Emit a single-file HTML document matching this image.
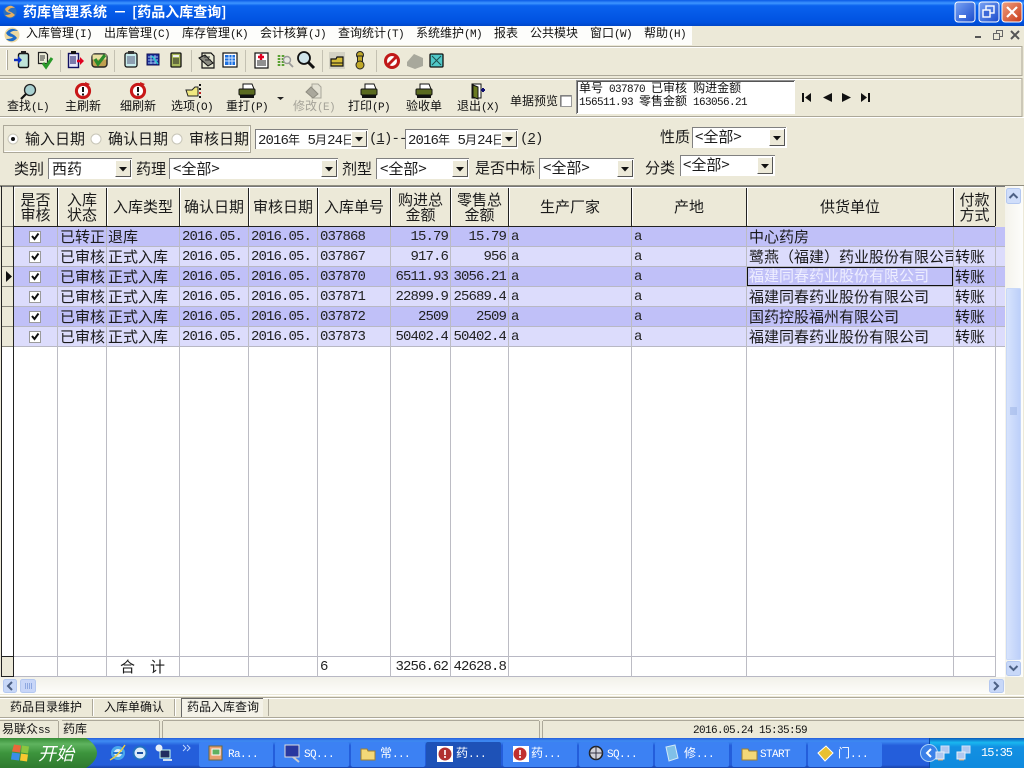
<!DOCTYPE html>
<html><head><meta charset="utf-8"><title>药库管理系统</title>
<style>
html,body{margin:0;padding:0;width:1024px;height:768px;overflow:hidden;background:#ece9d8}
svg.bg{position:absolute;left:0;top:0}
p{position:absolute;margin:0;white-space:nowrap;font:12px/16px "WenQuanYi Zen Hei","Noto Sans CJK SC",sans-serif;color:#111}
p.f{font-size:15px;color:#1a1a1a}
p.h{font-size:15px;line-height:15px;text-align:center;color:#1a1a1a}
p.m{font:14px/16px "Liberation Mono",monospace;letter-spacing:-.9px;color:#222}
p.r{font:14px/16px "Liberation Mono",monospace;letter-spacing:-.9px;direction:rtl;overflow:hidden;text-align:right;color:#222}
span.l{font:11px "Liberation Mono",monospace;letter-spacing:-.6px}
span.c{font:12px "WenQuanYi Zen Hei","Noto Sans CJK SC",sans-serif;letter-spacing:0}
p.w{color:#fff}
p.g{color:#a5a399}
</style></head><body>
<svg class="bg" width="1024" height="768" viewBox="0 0 1024 768">
<defs>
<linearGradient id="tb" x1="0" y1="0" x2="0" y2="1"><stop offset="0" stop-color="#0a5ae6"/><stop offset=".12" stop-color="#3d95ff"/><stop offset=".22" stop-color="#0a62ee"/><stop offset=".85" stop-color="#0052e0"/><stop offset="1" stop-color="#0047c8"/></linearGradient>
<linearGradient id="tk" x1="0" y1="0" x2="0" y2="1"><stop offset="0" stop-color="#245edb"/><stop offset=".1" stop-color="#3f8cf3"/><stop offset=".25" stop-color="#245edb"/><stop offset=".9" stop-color="#245edb"/><stop offset="1" stop-color="#1941a5"/></linearGradient>
<linearGradient id="st" x1="0" y1="0" x2="0" y2="1"><stop offset="0" stop-color="#388e38"/><stop offset=".2" stop-color="#5fb35f"/><stop offset=".5" stop-color="#3c943c"/><stop offset="1" stop-color="#2f7a2f"/></linearGradient>
<linearGradient id="tr" x1="0" y1="0" x2="0" y2="1"><stop offset="0" stop-color="#0c59b9"/><stop offset=".15" stop-color="#19b8f0"/><stop offset=".3" stop-color="#1290e2"/><stop offset="1" stop-color="#0f8ade"/></linearGradient>
<linearGradient id="btn" x1="0" y1="0" x2="1" y2="1"><stop offset="0" stop-color="#7aa4f4"/><stop offset="1" stop-color="#1a4bcc"/></linearGradient>
<linearGradient id="cls" x1="0" y1="0" x2="1" y2="1"><stop offset="0" stop-color="#f0a080"/><stop offset="1" stop-color="#c83a18"/></linearGradient>
<linearGradient id="sb" x1="0" y1="0" x2="1" y2="0"><stop offset="0" stop-color="#d8e4fc"/><stop offset="1" stop-color="#bccffa"/></linearGradient>
<linearGradient id="hs" x1="0" y1="0" x2="0" y2="1"><stop offset="0" stop-color="#f2f1e9"/><stop offset="1" stop-color="#fdfdfb"/></linearGradient>
<linearGradient id="vs" x1="0" y1="0" x2="1" y2="0"><stop offset="0" stop-color="#f4f3ec"/><stop offset="1" stop-color="#fdfdfb"/></linearGradient>
</defs>

<!-- title bar -->
<rect x="0" y="0" width="1024" height="26" fill="url(#tb)"/>
<circle cx="10" cy="12" r="6.5" fill="#2a6fc0"/><path d="M5 9 Q10 3 15 8 Q10 7 8 11 Q12 12 15 15 Q10 20 5 15 Q10 15 11 13 Q6 13 5 9Z" fill="#e8b060"/>
<rect x="955" y="2" width="20" height="20" rx="3" fill="url(#btn)" stroke="#fff"/><rect x="959" y="15" width="7" height="3" fill="#fff"/>
<rect x="979" y="2" width="20" height="20" rx="3" fill="url(#btn)" stroke="#fff"/><rect x="986" y="6" width="8" height="7" fill="none" stroke="#fff" stroke-width="1.4"/><rect x="983" y="10" width="7" height="7" fill="#3c68d8" stroke="#fff" stroke-width="1.4"/>
<rect x="1002" y="2" width="20" height="20" rx="3" fill="url(#cls)" stroke="#fff"/><path d="M1007 7 L1017 17 M1017 7 L1007 17" stroke="#fff" stroke-width="2.2"/>

<!-- menu bar -->
<rect x="0" y="26" width="692" height="19" fill="#fdfdfb"/>
<circle cx="12" cy="35" r="7.5" fill="#eed9a0"/><path d="M6 33 Q11 26 18 31 Q12 30 10 33 Q15 35 17 38 Q12 44 6 39 Q12 39 13 37 Q8 37 6 33Z" fill="#1f6cc8"/>
<path d="M975 37h6" stroke="#555" stroke-width="2"/>
<rect x="996.500" y="30.500" width="6" height="6" fill="none" stroke="#666"/><rect x="993.500" y="33.500" width="6" height="6" fill="#ece9d8" stroke="#666"/>
<path d="M1011 31 L1019 39 M1019 31 L1011 39" stroke="#555" stroke-width="2"/>

<!-- toolbar 1 -->
<path d="M0 46.500H1022V75.500H0" fill="none" stroke="#aca899"/>
<path d="M0 47.500H1021" stroke="#fff"/>
<path d="M7.500 50V70" stroke="#aca899"/><path d="M6.500 50V70" stroke="#fff"/>
<g stroke="#c4c1b2"><path d="M60.500 50V72 M114.500 50V72 M191.500 50V72 M245.500 50V72 M322.500 50V72 M376.500 50V72"/></g>
<!-- icons -->
<rect x="18.500" y="53.500" width="10" height="14" rx="1.500" fill="#bfe4d8" stroke="#111" stroke-width="1.400"/><rect x="21" y="51" width="5" height="3" fill="#222"/><path d="M14 60h6" stroke="#1030c0" stroke-width="2.400"/><path d="M18 56l4 4-4 4z" fill="#1030c0"/>
<path d="M38.500 52.500h7l2 2v9h-9z" fill="#f0f0dc" stroke="#222" stroke-width="1.200"/><path d="M40 56h5M40 58h5M40 60h4" stroke="#333"/><path d="M43 63l3 4 6-9" stroke="#2a9a2a" stroke-width="3" fill="none"/>
<rect x="68.500" y="53.500" width="10" height="14" fill="#e8e8f8" stroke="#101060" stroke-width="1.400"/><rect x="71" y="51" width="5" height="3" fill="#111"/><path d="M70 57h6M70 59h6M70 61h6M70 63h6" stroke="#101060"/><path d="M77 61h4" stroke="#e00020" stroke-width="2.600"/><path d="M80 57l4 4-4 4z" fill="#e00020"/>
<rect x="92" y="54" width="15" height="13" rx="3" fill="#c0a050" stroke="#222" stroke-width="1.400"/><rect x="92.500" y="54.500" width="14" height="5" fill="#e8e0a0"/><path d="M95 59l3 5 7-9" stroke="#2a8a2a" stroke-width="3.200" fill="none"/>
<rect x="125" y="53" width="12" height="14" rx="2" fill="#c8ecec" stroke="#111" stroke-width="1.300"/><rect x="128" y="51" width="6" height="3" fill="#333"/><path d="M127 57h8M127 59h8M127 61h8M127 63h8" stroke="#557"/>
<rect x="147" y="54" width="12" height="11" fill="#1c2ca0" stroke="#101050"/><path d="M148 57h10M148 60h10M148 63h10M151 55v9M155 55v9" stroke="#9ac4e8"/><path d="M152 56l6 8" stroke="#20d0d0" stroke-width="1.400"/>
<rect x="171" y="53" width="10" height="14" rx="1" fill="#a8b85c" stroke="#111" stroke-width="1.300"/><rect x="173" y="55" width="6" height="2" fill="#eee"/><path d="M173 59h6M173 61h6M173 63h6" stroke="#222"/>
<path d="M202 53h9l3 3v12h-12z" fill="#e8e8d4" stroke="#111" stroke-width="1.200"/><path d="M199 58l6-3 8 8-5 3z" fill="#8a8a80" stroke="#111"/><path d="M204 57h6M205 60h6" stroke="#333"/>
<rect x="223" y="53" width="14" height="14" fill="#fff" stroke="#111" stroke-width="1.200"/><path d="M225 55h10v10h-10z" fill="#1c70e0"/><path d="M225 58h10M225 61h10M229 55v10M232 55v10" stroke="#d8e8ff"/>
<rect x="255" y="53" width="13" height="15" fill="#fff" stroke="#111" stroke-width="1.200"/><path d="M261 54v6M258 57h6" stroke="#e00020" stroke-width="2.400"/><path d="M257 61h9M257 63h9M257 65h9" stroke="#222"/>
<path d="M279 55v12M283 55v12" stroke="#58a030" stroke-width="2.600" stroke-dasharray="2 1"/><circle cx="287" cy="60" r="3.500" fill="#e8e8e0" stroke="#999" stroke-width="1.400"/><path d="M289 63l4 4" stroke="#999" stroke-width="1.800"/>
<circle cx="304" cy="58" r="6" fill="#cfe4ea" stroke="#111" stroke-width="1.800"/><path d="M308 62l6 6" stroke="#111" stroke-width="3"/>
<rect x="329" y="52" width="16" height="17" fill="#d4d2c4"/><path d="M331 59h5l1-2h6v9h-12z" fill="#d4bc38" stroke="#111" stroke-width="1.200"/><path d="M331 63h12" stroke="#111"/>
<circle cx="360" cy="55" r="3.500" fill="#c0a828" stroke="#222"/><rect x="357.500" y="56" width="5" height="9" fill="#c0a828" stroke="#222"/><circle cx="360" cy="65" r="4" fill="#c0a828" stroke="#222"/>
<circle cx="392" cy="61" r="6.500" fill="#fff" stroke="#c01818" stroke-width="3"/><path d="M388 65l8-8" stroke="#c01818" stroke-width="2.800"/>
<path d="M407 62 L414 54 L423 58 L423 66 L415 69 L407 66Z" fill="#a8a89c"/>
<rect x="430" y="54" width="13" height="13" rx="1" fill="#50c8c8" stroke="#111" stroke-width="1.300"/><path d="M432 56l9 9M441 56l-9 9" stroke="#205050"/>

<!-- toolbar 2 -->
<path d="M0 78.500H1022V116.500H0" fill="none" stroke="#aca899"/><path d="M0 79.500H1021" stroke="#fff"/>
<circle cx="30" cy="90" r="5.500" fill="#a8d0d0" stroke="#222" stroke-width="1.300"/><path d="M26 94l-5 5" stroke="#111" stroke-width="2.200"/>
<circle cx="83" cy="91" r="6.600" fill="#fff" stroke="#c81818" stroke-width="3"/><path d="M83 87v5M83 93.500v2" stroke="#111" stroke-width="2"/><path d="M85 82l5 2-4 3z" fill="#c81818"/>
<circle cx="138" cy="91" r="6.600" fill="#fff" stroke="#c81818" stroke-width="3"/><path d="M138 87v5M138 93.500v2" stroke="#111" stroke-width="2"/><path d="M140 82l5 2-4 3z" fill="#c81818"/>
<path d="M186 90h6l3-3h3v9h-10z" fill="#f0e880" stroke="#222"/><rect x="199" y="84" width="2" height="2" fill="#111"/><rect x="199" y="88" width="2" height="2" fill="#111"/><rect x="199" y="92" width="2" height="2" fill="#c02020"/><rect x="199" y="96" width="2" height="2" fill="#111"/>
<path d="M243 84h9l2 5h-11z" fill="#fff" stroke="#111"/><rect x="239" y="89" width="16" height="6" rx="1" fill="#5a6a20" stroke="#111"/><rect x="240" y="95" width="14" height="3" fill="#111"/>
<path d="M277 97h7l-3.500 3z" fill="#222"/>
<path d="M312 84h6l3 3v11h-9z" fill="#e4e2d4" stroke="#a8a69a"/><path d="M306 92l5-5 7 7-5 4z" fill="#aaa89c" stroke="#8e8c80"/>
<path d="M365 84h9l2 5h-11z" fill="#fff" stroke="#111"/><rect x="361" y="89" width="16" height="6" rx="1" fill="#5a6a20" stroke="#111"/><rect x="362" y="95" width="14" height="3" fill="#111"/>
<path d="M420 84h9l2 5h-11z" fill="#fff" stroke="#111"/><rect x="416" y="89" width="16" height="6" rx="1" fill="#5a6a20" stroke="#111"/><rect x="417" y="95" width="14" height="3" fill="#111"/>
<rect x="472" y="84" width="9" height="14" fill="#fff" stroke="#111"/><path d="M473 85l5 2v12l-5-2z" fill="#6a7a20" stroke="#111"/><path d="M481 90h4M483 88v4" stroke="#101070" stroke-width="2"/>
<!-- preview checkbox + info box -->
<rect x="560.500" y="95.500" width="11" height="11" fill="#fff" stroke="#999"/><path d="M561 106V96H571" fill="none" stroke="#666"/>
<rect x="576" y="80" width="219" height="34" fill="#fff"/><path d="M576.500 114V80.500H795" fill="none" stroke="#909090"/><path d="M577.500 113V81.500H794" fill="none" stroke="#555"/>
<g fill="#111"><path d="M802 93h2v9h-2zM811 93v9l-6-4.500z"/><path d="M832 93v9l-9-4.500z"/><path d="M842 93v9l9-4.500z"/><path d="M861 93v9l6-4.500-6-4.500zM868 93h2v9h-2z"/></g>
<path d="M0 117.500H1024" stroke="#fff"/>

<!-- filter panel -->
<rect x="3.500" y="125.500" width="247" height="27" fill="none" stroke="#aca899"/><path d="M4.500 151.500H249.500V126.500" fill="none" stroke="#fff"/>
<path d="M0 185.500H1024" stroke="#908e80"/>
<circle cx="13" cy="139" r="5" fill="#fff" stroke="#c8c6b8"/><circle cx="13" cy="139" r="2" fill="#111"/>
<circle cx="96" cy="139" r="5" fill="#fff" stroke="#c8c6b8"/><circle cx="177" cy="139" r="5" fill="#fff" stroke="#c8c6b8"/>
<!-- combos -->
<rect x="255" y="129" width="113" height="20" fill="#fff"/><path d="M255.500 149V129.500H368" fill="none" stroke="#808080"/><rect x="351" y="131" width="16" height="16" fill="#ece9d8"/><path d="M351.500 147V131.500H367" stroke="#fff" fill="none"/><path d="M351.500 146.500H366.500V131" stroke="#555" fill="none"/><path d="M355 137h8l-4 4.500z" fill="#111"/>
<rect x="405" y="129" width="113" height="20" fill="#fff"/><path d="M405.500 149V129.500H518" fill="none" stroke="#808080"/><rect x="501" y="131" width="16" height="16" fill="#ece9d8"/><path d="M501.500 147V131.500H517" stroke="#fff" fill="none"/><path d="M501.500 146.500H516.500V131" stroke="#555" fill="none"/><path d="M505 137h8l-4 4.500z" fill="#111"/>
<rect x="692" y="127" width="95" height="21" fill="#fff"/><path d="M692.500 148V127.500H786" fill="none" stroke="#808080"/><rect x="769" y="129" width="16" height="17" fill="#ece9d8"/><path d="M769.500 146V129.500H785" stroke="#fff" fill="none"/><path d="M769.500 145.500H784.500V129" stroke="#555" fill="none"/><path d="M773 136h8l-4 4.500z" fill="#111"/>
<rect x="48" y="158" width="84" height="21" fill="#fff"/><path d="M48.500 179V158.500H132" fill="none" stroke="#808080"/><rect x="115" y="160" width="16" height="17" fill="#ece9d8"/><path d="M115.500 177V160.500H131" stroke="#fff" fill="none"/><path d="M115.500 176.500H130.500V160" stroke="#555" fill="none"/><path d="M119 167h8l-4 4.500z" fill="#111"/>
<rect x="169" y="158" width="169" height="21" fill="#fff"/><path d="M169.500 179V158.500H338" fill="none" stroke="#808080"/><rect x="321" y="160" width="16" height="17" fill="#ece9d8"/><path d="M321.500 177V160.500H337" stroke="#fff" fill="none"/><path d="M321.500 176.500H336.500V160" stroke="#555" fill="none"/><path d="M325 167h8l-4 4.500z" fill="#111"/>
<rect x="376" y="158" width="93" height="21" fill="#fff"/><path d="M376.500 179V158.500H469" fill="none" stroke="#808080"/><rect x="452" y="160" width="16" height="17" fill="#ece9d8"/><path d="M452.500 177V160.500H468" stroke="#fff" fill="none"/><path d="M452.500 176.500H467.500V160" stroke="#555" fill="none"/><path d="M456 167h8l-4 4.500z" fill="#111"/>
<rect x="539" y="158" width="95" height="21" fill="#fff"/><path d="M539.500 179V158.500H634" fill="none" stroke="#808080"/><rect x="617" y="160" width="16" height="17" fill="#ece9d8"/><path d="M617.500 177V160.500H633" stroke="#fff" fill="none"/><path d="M617.500 176.500H632.500V160" stroke="#555" fill="none"/><path d="M621 167h8l-4 4.500z" fill="#111"/>
<rect x="680" y="155" width="95" height="21" fill="#fff"/><path d="M680.500 176V155.500H775" fill="none" stroke="#808080"/><rect x="757" y="157" width="16" height="17" fill="#ece9d8"/><path d="M757.500 174V157.500H773" stroke="#fff" fill="none"/><path d="M757.500 173.500H772.500V157" stroke="#555" fill="none"/><path d="M761 164h8l-4 4.500z" fill="#111"/>

<!-- grid -->
<rect x="1" y="186" width="1004" height="491" fill="#fff"/>
<rect x="1" y="187" width="1004" height="40" fill="#ece9d8"/>
<rect x="14" y="227" width="991" height="20" fill="#c0c0f8"/>
<rect x="14" y="247" width="991" height="20" fill="#dcdcfc"/>
<rect x="14" y="267" width="991" height="20" fill="#c0c0f8"/>
<rect x="14" y="287" width="991" height="20" fill="#dcdcfc"/>
<rect x="14" y="307" width="991" height="20" fill="#c0c0f8"/>
<rect x="14" y="327" width="991" height="20" fill="#dcdcfc"/>
<rect x="1" y="227" width="13" height="120" fill="#ece9d8"/>
<rect x="1" y="657" width="13" height="20" fill="#ece9d8"/>
<path d="M0 186.500H1005" stroke="#777"/>
<path d="M1.500 186V677" stroke="#222"/>
<path d="M13.500 186V677" stroke="#222"/>
<path d="M14 226.500H995" stroke="#222"/>
<g stroke="#b8b8c4"><path d="M14 246.500H1005M14 266.500H1005M14 286.500H1005M14 306.500H1005M14 326.500H1005M14 346.500H1005M14 656.500H995M14 676.500H995"/></g>
<g stroke="#8c8a80"><path d="M2 226.500H13M2 246.500H13M2 266.500H13M2 286.500H13M2 306.500H13M2 326.500H13M2 346.500H13"/></g>
<g stroke="#222"><path d="M1 656.500H13M1 676.500H13"/></g>
<g stroke="#222"><path d="M57.500 187V226M106.500 187V226M179.500 187V226M248.500 187V226M317.500 187V226M390.500 187V226M450.500 187V226M508.500 187V226M631.500 187V226M746.500 187V226M953.500 187V226M995.500 187V226"/></g>
<g stroke="#fff"><path d="M14.500 188V225M58.500 188V225M107.500 188V225M180.500 188V225M249.500 188V225M318.500 188V225M391.500 188V225M451.500 188V225M509.500 188V225M632.500 188V225M747.500 188V225M954.500 188V225M14 187.500H995"/></g>
<g stroke="#bcbcc4"><path d="M57.500 227V677M106.500 227V677M179.500 227V677M248.500 227V677M317.500 227V677M390.500 227V677M450.500 227V677M508.500 227V677M631.500 227V677M746.500 227V677M953.500 227V677M995.500 227V677"/></g>
<!-- row indicator arrow -->
<path d="M6 271v11l6-5.500z" fill="#111"/>
<!-- checkboxes -->
<g fill="#fff" stroke="#9a9a9a"><rect x="29.500" y="231.500" width="11" height="11"/><rect x="29.500" y="251.500" width="11" height="11"/><rect x="29.500" y="271.500" width="11" height="11"/><rect x="29.500" y="291.500" width="11" height="11"/><rect x="29.500" y="311.500" width="11" height="11"/><rect x="29.500" y="331.500" width="11" height="11"/></g>
<g fill="none" stroke="#111" stroke-width="2"><path d="M32 236l2.500 3 4-5.500"/><path d="M32 256l2.500 3 4-5.500"/><path d="M32 276l2.500 3 4-5.500"/><path d="M32 296l2.500 3 4-5.500"/><path d="M32 316l2.500 3 4-5.500"/><path d="M32 336l2.500 3 4-5.500"/></g>
<rect x="747.500" y="267.500" width="205" height="18" fill="#c0c0f8" stroke="#111"/>

<!-- v scrollbar -->
<rect x="1005" y="186" width="18" height="491" fill="url(#vs)"/>
<rect x="1006.500" y="188.500" width="14" height="15" rx="2" fill="#d0defa" stroke="#b4c8f0"/><path d="M1009.500 198l4-4 4 4" stroke="#4d6185" stroke-width="2" fill="none"/>
<rect x="1006.500" y="288.500" width="14" height="371" rx="1" fill="url(#sb)" stroke="#c8d8f8"/>
<path d="M1010 408h7M1010 410h7M1010 412h7M1010 414h7" stroke="#9ab2e4"/>
<rect x="1006.500" y="661.500" width="14" height="14" rx="2" fill="#c8d8f8" stroke="#b4c8f0"/><path d="M1009.500 666l4 4 4-4" stroke="#4d6185" stroke-width="2" fill="none"/>
<!-- h scrollbar -->
<rect x="0" y="677" width="1005" height="17" fill="url(#hs)"/>
<rect x="1005" y="677" width="18" height="17" fill="#ece9d8"/>
<rect x="3.500" y="679.500" width="13" height="13" rx="2" fill="#c8d8f8" stroke="#b4c8f0"/><path d="M12 682l-4 4 4 4" stroke="#4d6185" stroke-width="2" fill="none"/>
<rect x="20.500" y="679.500" width="15" height="13" rx="2" fill="#c8d6f8" stroke="#b4c8f0"/><path d="M25.500 683v6M27.500 683v6M29.500 683v6M31.500 683v6" stroke="#8ea8e0"/>
<rect x="989.500" y="679.500" width="14" height="13" rx="2" fill="#c8d8f8" stroke="#b4c8f0"/><path d="M994 682l4 4-4 4" stroke="#4d6185" stroke-width="2" fill="none"/>
<path d="M0 695.500H1024" stroke="#fff"/>

<!-- tabs -->
<path d="M0 697.500H1024" stroke="#aca899"/><path d="M0 698.500H1024" stroke="#fff"/>
<path d="M92.500 699V716M174.500 699V716M268.500 699V716" stroke="#aca899"/><path d="M93.500 699V716M175.500 699V716" stroke="#fff"/>
<rect x="181" y="698" width="82" height="19" fill="#f4f2e8"/><path d="M181.500 717V698.500H263" fill="none" stroke="#666"/>
<path d="M0 717.500H1024" stroke="#aca899"/><path d="M0 718.500H1024" stroke="#fff"/>
<!-- status -->
<path d="M58.500 721V738M159.500 721V738M162.500 721V738M539.500 721V738M542.500 721V738" stroke="#aca899"/>
<path d="M0 720.500H58M62 720.500H159M163 720.500H539M543 720.500H1024" stroke="#aca899"/>

<!-- taskbar -->
<rect x="0" y="738" width="1024" height="30" fill="url(#tk)"/>
<path d="M0 738H86Q97 745 97 753Q97 761 86 768H0Z" fill="url(#st)"/>
<g transform="translate(2,-1.500)"><path d="M12 746l7 1-1 7-8-1z" fill="#e8683a"/><path d="M20 747l7 1-1 7-7-1z" fill="#8cc63f"/><path d="M10 754l8 1-1 7-8-1z" fill="#3a8ee8"/><path d="M19 755l7 1-1 7-7-1z" fill="#f8c830"/></g>
<circle cx="118" cy="753" r="5.500" fill="#dcecf8" stroke="#4aa8ec" stroke-width="3"/><path d="M113 753h10" stroke="#2878d0" stroke-width="2"/><path d="M110 760Q118 756 125 745" stroke="#f0d040" stroke-width="1.400" fill="none"/>
<circle cx="140" cy="753" r="6.500" fill="#dcecf8" stroke="#2070c0" stroke-width="2"/><path d="M137 753h6" stroke="#1a4ea0" stroke-width="2"/>
<rect x="160" y="750" width="10" height="8" fill="#222c60" stroke="#cfe"/><circle cx="159" cy="748" r="3.500" fill="#e8f0f8"/><path d="M163 760h9" stroke="#d0e0f0" stroke-width="2"/>
<path d="M183 745l3 3-3 3M187 745l3 3-3 3" fill="none" stroke="#c0d8ff"/>
<g fill="#3c81f3"><rect x="199" y="742" width="74" height="25" rx="2"/><rect x="275" y="742" width="74" height="25" rx="2"/><rect x="351" y="742" width="74" height="25" rx="2"/><rect x="503" y="742" width="74" height="25" rx="2"/><rect x="579" y="742" width="74" height="25" rx="2"/><rect x="655" y="742" width="74" height="25" rx="2"/><rect x="732" y="742" width="74" height="25" rx="2"/><rect x="808" y="742" width="74" height="25" rx="2"/></g>
<rect x="426" y="742" width="75" height="25" rx="2" fill="#1e52b7"/>
<rect x="209" y="746" width="13" height="14" fill="#e8a070" stroke="#664"/><rect x="212" y="749" width="8" height="6" fill="#60b060" stroke="#fff"/>
<rect x="285" y="745" width="14" height="12" fill="#2838a0" stroke="#ddd"/><path d="M293 757l6 5" stroke="#ccc" stroke-width="2"/>
<path d="M361 749h6l1 2h7v9h-14z" fill="#f4d878" stroke="#a08030"/>
<rect x="437" y="746" width="16" height="16" fill="#fff"/><circle cx="445" cy="754" r="6.500" fill="#b03030"/><path d="M445 750v5M445 756v2" stroke="#fff" stroke-width="1.600"/>
<rect x="513" y="746" width="16" height="16" fill="#fff"/><circle cx="520" cy="754" r="6.500" fill="#c03030"/><path d="M520 750v5M520 756v2" stroke="#fff" stroke-width="1.600"/>
<circle cx="596" cy="753" r="6.500" fill="#d0d0d8" stroke="#222" stroke-width="1.500"/><path d="M596 746v14M589 753h14" stroke="#334"/>
<path d="M666 747l9-2 3 13-9 3z" fill="#80c0e8" stroke="#d0e8f8"/>
<path d="M742 749h6l1 2h8v9h-15z" fill="#f4d878" stroke="#a08030"/>
<path d="M818 753l8-7 7 7-8 8z" fill="#e8c030" stroke="#fff"/>
<!-- tray -->
<rect x="929" y="738" width="95" height="30" fill="url(#tr)"/>
<path d="M929.500 738V768" stroke="#0a4aa8"/>
<circle cx="929" cy="753" r="8.500" fill="#3a80e8" stroke="#a8d0f8"/><path d="M931 749l-4 4 4 4" stroke="#fff" stroke-width="2" fill="none"/>
<rect x="941" y="746" width="8" height="7" fill="#b0c8f0" stroke="#d0e0f8"/><rect x="936" y="752" width="8" height="7" fill="#b0c8f0" stroke="#e8f0f8"/><path d="M938 760h5" stroke="#e0a060"/>
<rect x="962" y="746" width="8" height="7" fill="#b0c8f0" stroke="#d0e0f8"/><rect x="957" y="752" width="8" height="7" fill="#b0c8f0" stroke="#e8f0f8"/><path d="M959 760h5" stroke="#e0a060"/>
</svg>

<!-- title -->
<p class="w" style="left:23px;top:4px;font-size:14px;font-weight:bold;line-height:17px">药库管理系统</p>
<p class="w" style="left:113px;top:4px;font-size:14px;font-weight:bold;line-height:17px">－</p>
<p class="w" style="left:132px;top:4px;font-size:14px;font-weight:bold;line-height:17px">[药品入库查询]</p>

<!-- menu -->
<p style="left:26px;top:25px">入库管理<span class="l">(I)</span></p>
<p style="left:104px;top:25px">出库管理<span class="l">(C)</span></p>
<p style="left:182px;top:25px">库存管理<span class="l">(K)</span></p>
<p style="left:260px;top:25px">会计核算<span class="l">(J)</span></p>
<p style="left:338px;top:25px">查询统计<span class="l">(T)</span></p>
<p style="left:416px;top:25px">系统维护<span class="l">(M)</span></p>
<p style="left:494px;top:25px">报表</p>
<p style="left:530px;top:25px">公共模块</p>
<p style="left:590px;top:25px">窗口<span class="l">(W)</span></p>
<p style="left:644px;top:25px">帮助<span class="l">(H)</span></p>

<!-- toolbar 2 labels -->
<p style="left:7px;top:98px">查找<span class="l">(L)</span></p>
<p style="left:65px;top:98px">主刷新</p>
<p style="left:120px;top:98px">细刷新</p>
<p style="left:171px;top:98px">选项<span class="l">(O)</span></p>
<p style="left:226px;top:98px">重打<span class="l">(P)</span></p>
<p class="g" style="left:293px;top:98px">修改<span class="l">(E)</span></p>
<p style="left:348px;top:98px">打印<span class="l">(P)</span></p>
<p style="left:406px;top:98px">验收单</p>
<p style="left:457px;top:98px">退出<span class="l">(X)</span></p>
<p style="left:510px;top:93px">单据预览</p>
<p style="left:579px;top:80px">单号<span class="l"> 037870 </span>已审核<span class="l"> </span>购进金额</p>
<p style="left:579px;top:93px"><span class="l">156511.93 </span>零售金额<span class="l"> 163056.21</span></p>

<!-- filter -->
<p class="f" style="left:25px;top:131px">输入日期</p>
<p class="f" style="left:108px;top:131px">确认日期</p>
<p class="f" style="left:189px;top:131px">审核日期</p>
<p class="m" style="left:258px;top:131px;width:93px;overflow:hidden">2016<span class="c">年</span> 5<span class="c">月</span>24<span class="c">日</span></p>
<p class="m" style="left:369px;top:131px">(<u>1</u>)--</p>
<p class="m" style="left:408px;top:131px;width:93px;overflow:hidden">2016<span class="c">年</span> 5<span class="c">月</span>24<span class="c">日</span></p>
<p class="m" style="left:520px;top:131px">(<u>2</u>)</p>
<p class="f" style="left:660px;top:129px">性质</p>
<p class="f" style="left:695px;top:129px">&lt;全部&gt;</p>
<p class="f" style="left:14px;top:161px">类别</p>
<p class="f" style="left:52px;top:161px">西药</p>
<p class="f" style="left:136px;top:161px">药理</p>
<p class="f" style="left:173px;top:161px">&lt;全部&gt;</p>
<p class="f" style="left:342px;top:161px">剂型</p>
<p class="f" style="left:380px;top:161px">&lt;全部&gt;</p>
<p class="f" style="left:475px;top:160px">是否中标</p>
<p class="f" style="left:543px;top:160px">&lt;全部&gt;</p>
<p class="f" style="left:645px;top:160px">分类</p>
<p class="f" style="left:683px;top:157px">&lt;全部&gt;</p>

<!-- header -->
<p class="h" style="left:14px;top:192px;width:43px">是否<br>审核</p>
<p class="h" style="left:58px;top:192px;width:48px">入库<br>状态</p>
<p class="h" style="left:107px;top:199px;width:72px">入库类型</p>
<p class="h" style="left:180px;top:199px;width:68px">确认日期</p>
<p class="h" style="left:249px;top:199px;width:68px">审核日期</p>
<p class="h" style="left:318px;top:199px;width:72px">入库单号</p>
<p class="h" style="left:391px;top:192px;width:59px">购进总<br>金额</p>
<p class="h" style="left:451px;top:192px;width:57px">零售总<br>金额</p>
<p class="h" style="left:509px;top:199px;width:122px">生产厂家</p>
<p class="h" style="left:632px;top:199px;width:114px">产地</p>
<p class="h" style="left:747px;top:199px;width:206px">供货单位</p>
<p class="h" style="left:954px;top:192px;width:41px">付款<br>方式</p>

<!-- row 1 -->
<p class="f" style="left:60px;top:229px">已转正</p><p class="f" style="left:108px;top:229px">退库</p>
<p class="m" style="left:182px;top:229px">2016.05.</p><p class="m" style="left:251px;top:229px">2016.05.</p><p class="m" style="left:320px;top:229px">037868</p>
<p class="r" style="left:391px;top:229px;width:57px">15.79</p><p class="r" style="left:452px;top:229px;width:54px">15.79</p>
<p class="m" style="left:511px;top:229px">a</p><p class="m" style="left:634px;top:229px">a</p>
<p class="f" style="left:749px;top:229px">中心药房</p>
<!-- row 2 -->
<p class="f" style="left:60px;top:249px">已审核</p><p class="f" style="left:108px;top:249px">正式入库</p>
<p class="m" style="left:182px;top:249px">2016.05.</p><p class="m" style="left:251px;top:249px">2016.05.</p><p class="m" style="left:320px;top:249px">037867</p>
<p class="r" style="left:391px;top:249px;width:57px">917.6</p><p class="r" style="left:452px;top:249px;width:54px">956</p>
<p class="m" style="left:511px;top:249px">a</p><p class="m" style="left:634px;top:249px">a</p>
<p class="f" style="left:749px;top:249px;width:204px;overflow:hidden">鹭燕（福建）药业股份有限公司</p><p class="f" style="left:955px;top:249px">转账</p>
<!-- row 3 -->
<p class="f" style="left:60px;top:269px">已审核</p><p class="f" style="left:108px;top:269px">正式入库</p>
<p class="m" style="left:182px;top:269px">2016.05.</p><p class="m" style="left:251px;top:269px">2016.05.</p><p class="m" style="left:320px;top:269px">037870</p>
<p class="r" style="left:391px;top:269px;width:57px">6511.93</p><p class="r" style="left:452px;top:269px;width:54px">3056.21</p>
<p class="m" style="left:511px;top:269px">a</p><p class="m" style="left:634px;top:269px">a</p>
<p class="f" style="left:749px;top:268px;color:#eef">福建同春药业股份有限公司</p><p class="f" style="left:955px;top:269px">转账</p>
<!-- row 4 -->
<p class="f" style="left:60px;top:289px">已审核</p><p class="f" style="left:108px;top:289px">正式入库</p>
<p class="m" style="left:182px;top:289px">2016.05.</p><p class="m" style="left:251px;top:289px">2016.05.</p><p class="m" style="left:320px;top:289px">037871</p>
<p class="r" style="left:391px;top:289px;width:57px">22899.9</p><p class="r" style="left:452px;top:289px;width:54px">25689.4</p>
<p class="m" style="left:511px;top:289px">a</p><p class="m" style="left:634px;top:289px">a</p>
<p class="f" style="left:749px;top:289px">福建同春药业股份有限公司</p><p class="f" style="left:955px;top:289px">转账</p>
<!-- row 5 -->
<p class="f" style="left:60px;top:309px">已审核</p><p class="f" style="left:108px;top:309px">正式入库</p>
<p class="m" style="left:182px;top:309px">2016.05.</p><p class="m" style="left:251px;top:309px">2016.05.</p><p class="m" style="left:320px;top:309px">037872</p>
<p class="r" style="left:391px;top:309px;width:57px">2509</p><p class="r" style="left:452px;top:309px;width:54px">2509</p>
<p class="m" style="left:511px;top:309px">a</p><p class="m" style="left:634px;top:309px">a</p>
<p class="f" style="left:749px;top:309px">国药控股福州有限公司</p><p class="f" style="left:955px;top:309px">转账</p>
<!-- row 6 -->
<p class="f" style="left:60px;top:329px">已审核</p><p class="f" style="left:108px;top:329px">正式入库</p>
<p class="m" style="left:182px;top:329px">2016.05.</p><p class="m" style="left:251px;top:329px">2016.05.</p><p class="m" style="left:320px;top:329px">037873</p>
<p class="r" style="left:391px;top:329px;width:57px">50402.4</p><p class="r" style="left:452px;top:329px;width:54px">50402.4</p>
<p class="m" style="left:511px;top:329px">a</p><p class="m" style="left:634px;top:329px">a</p>
<p class="f" style="left:749px;top:329px">福建同春药业股份有限公司</p><p class="f" style="left:955px;top:329px">转账</p>
<!-- totals -->
<p class="f" style="left:120px;top:659px">合　计</p>
<p class="m" style="left:320px;top:659px">6</p>
<p class="r" style="left:391px;top:659px;width:57px">3256.62</p><p class="r" style="left:452px;top:659px;width:54px">42628.8</p>

<!-- tabs -->
<p style="left:10px;top:699px">药品目录维护</p>
<p style="left:104px;top:699px">入库单确认</p>
<p style="left:187px;top:699px">药品入库查询</p>

<!-- status -->
<p style="left:2px;top:721px">易联众<span class="l">ss</span></p>
<p style="left:63px;top:721px">药库</p>
<p style="left:693px;top:723px;font:11px/16px 'Liberation Mono',monospace;letter-spacing:-.6px">2016.05.24 15:35:59</p>

<!-- taskbar text -->
<p class="w" style="left:38px;top:742px;font-size:18px;font-style:italic;line-height:22px">开始</p>
<p class="w" style="left:228px;top:745px"><span class="l">Ra...</span></p>
<p class="w" style="left:304px;top:745px"><span class="l">SQ...</span></p>
<p class="w" style="left:380px;top:745px">常<span class="l">...</span></p>
<p class="w" style="left:456px;top:745px">药<span class="l">...</span></p>
<p class="w" style="left:531px;top:745px">药<span class="l">...</span></p>
<p class="w" style="left:607px;top:745px"><span class="l">SQ...</span></p>
<p class="w" style="left:684px;top:745px">修<span class="l">...</span></p>
<p class="w" style="left:760px;top:745px"><span class="l">START</span></p>
<p class="w" style="left:838px;top:745px">门<span class="l">...</span></p>
<p class="w" style="left:981px;top:745px;font:12px/16px 'Liberation Mono',monospace;letter-spacing:-1px">15:35</p>
</body></html>
